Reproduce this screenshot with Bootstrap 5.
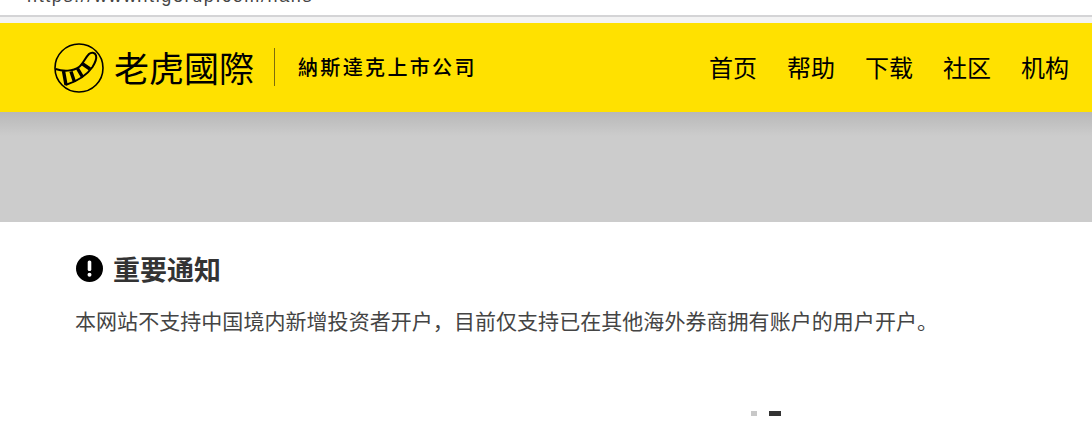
<!DOCTYPE html>
<html lang="zh">
<head>
<meta charset="utf-8">
<title>老虎國際</title>
<link href="https://cdn.jsdelivr.net/npm/bootstrap@5.3.0/dist/css/bootstrap.min.css" rel="stylesheet">
<style>
html,body{height:423px;overflow:hidden;background:#fff}
body{font-family:"Liberation Sans","Noto Sans CJK SC",sans-serif}
.urlbar{height:15px;overflow:hidden;background:#fff;padding-left:27px;font-size:18px;line-height:1;color:#444}
.urltext{margin-top:-13px;letter-spacing:1.62px;white-space:nowrap}
.urlline{height:2px;background:#d4d4d6}
.urlgap{height:6px;background:#f3f3f3}
.topbar{height:89px;background:#ffe100;padding-left:54px;padding-right:23px;color:#000}
.brandcjk{font-family:"Noto Sans CJK TC","Noto Sans CJK SC",sans-serif}
.brandname{font-size:35px;line-height:1;font-weight:400;margin:-2px 0 0 10px}
.brandrule{width:1px;height:38px;background:#7d6c0c;margin:-1px 22px 0 20px}
.brandsub{font-size:20px;line-height:1;font-weight:500;letter-spacing:2.35px;margin:-2px 0 0 1px}
.topnav{gap:30px;font-size:24px;line-height:1;font-family:"Noto Sans CJK SC",sans-serif;font-weight:400;margin-top:-2px}
.topnav a{color:#000;text-decoration:none}
.hero{height:110px;background:linear-gradient(#b8b8b8,#ccc 24px)}
.noticebox{padding:30px 0 0 76px;color:#333;font-family:"Noto Sans CJK SC",sans-serif}
.noticehead{gap:10px;height:32px}
.noticehead h1{font-size:27px;line-height:1;font-weight:700;margin:0}
.noticetext{font-size:21px;line-height:1;font-weight:400;letter-spacing:.05px;color:#444;margin:26px 0 0 -1px;white-space:nowrap}
.pager{gap:12px;margin:80px 0 0 751px}
.pagerdot{display:block;height:5px}
.pagerdot.off{width:6px;background:#c8c8c8}
.pagerdot.on{width:12px;background:#333}
</style>
</head>
<body>
<div class="urlbar"><div class="urltext">https://www.itigerup.com/hans</div></div>
<div class="urlline"></div>
<div class="urlgap"></div>
<header class="topbar d-flex align-items-center justify-content-between">
  <div class="d-flex align-items-center brandcjk">
    <svg width="50" height="50" viewBox="0 0 50 50" fill="none" stroke="#000" aria-label="logo">
      <circle cx="25" cy="25" r="24" stroke-width="1.6"/>
      <path d="M1.500 26 C9 28.500 19 28.500 25 24 C29 21 31 15 35 11 C37 9 41 9 42 12.500 C43 16 41 20 38.500 24 C33 32 24 38 11.500 42" stroke-width="2"/>
      <path d="M9.500 28 L12 42 M17 28.500 L20.500 39 M23.500 25.500 L28.500 34 M28 20.500 L36 26" stroke-width="3.400"/>
    </svg>
    <span class="brandname">老虎國際</span>
    <span class="brandrule"></span>
    <span class="brandsub">納斯達克上市公司</span>
  </div>
  <nav class="topnav d-flex">
    <a href="#">首页</a><a href="#">帮助</a><a href="#">下载</a><a href="#">社区</a><a href="#">机构</a>
  </nav>
</header>
<div class="hero"></div>
<main class="noticebox">
  <div class="noticehead d-flex align-items-center">
    <svg width="27" height="27" viewBox="0 0 27 27" aria-hidden="true"><circle cx="13.5" cy="13.5" r="13.5" fill="#000"/><rect x="11.7" y="5.5" width="3.6" height="10.5" rx="1.6" fill="#fff"/><circle cx="13.5" cy="19.8" r="2" fill="#fff"/></svg>
    <h1>重要通知</h1>
  </div>
  <p class="noticetext">本网站不支持中国境内新增投资者开户，目前仅支持已在其他海外券商拥有账户的用户开户。</p>
</main>
<div class="pager d-flex align-items-center"><span class="pagerdot off"></span><span class="pagerdot on"></span></div>
<script src="https://cdn.jsdelivr.net/npm/bootstrap@5.3.0/dist/js/bootstrap.bundle.min.js"></script>
</body>
</html>
